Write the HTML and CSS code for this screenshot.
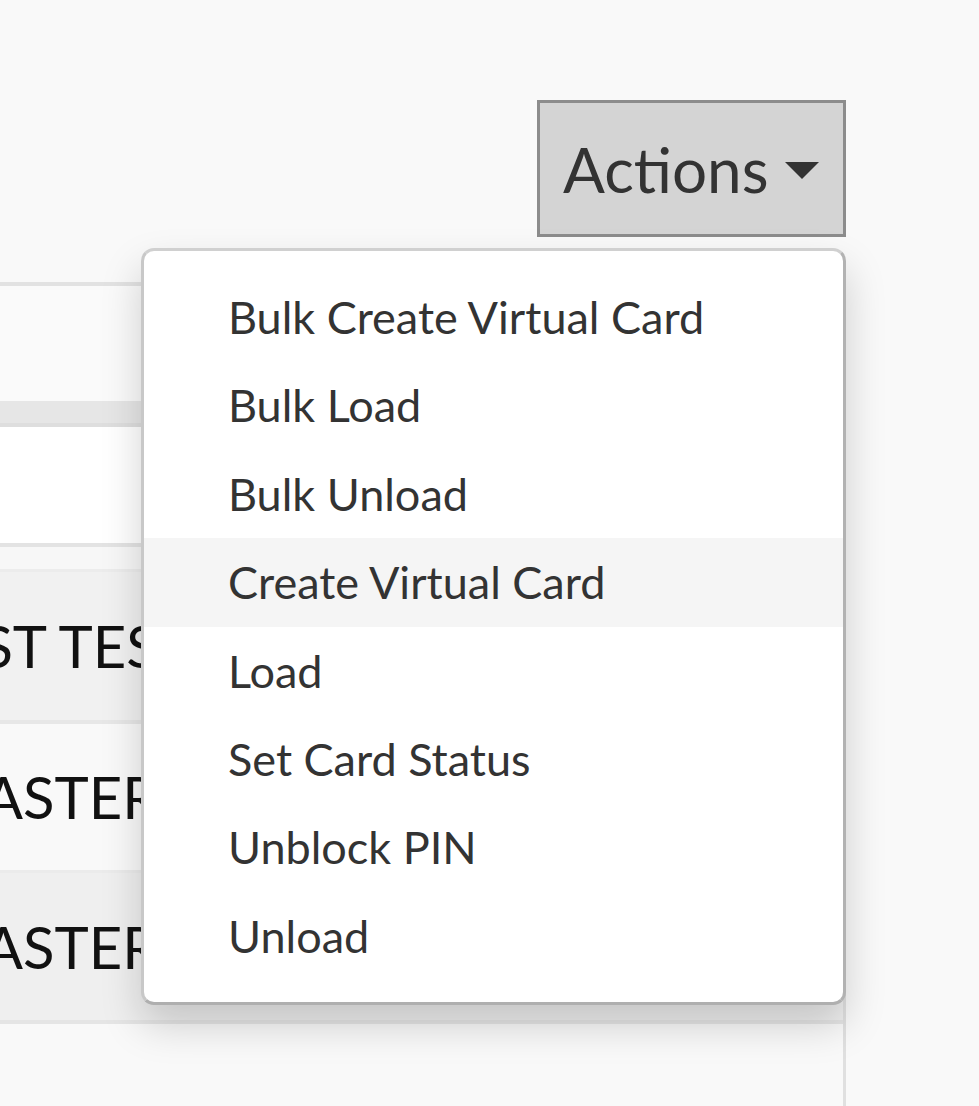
FILE: index.html
```html
<!DOCTYPE html>
<html lang="en">
<head>
<meta charset="utf-8">
<title>Cards - Actions</title>
<link rel="stylesheet" href="styles.css">
</head>
<body>
  <div class="toolbar">
    <div class="actions">
      <button class="btn-actions" type="button">
        <span class="btn-label">Actions</span>
        <span class="caret"></span>
      </button>
      <ul class="menu">
        <li class="menu-item">Bulk Create Virtual Card</li>
        <li class="menu-item">Bulk Load</li>
        <li class="menu-item">Bulk Unload</li>
        <li class="menu-item is-hover">Create Virtual Card</li>
        <li class="menu-item">Load</li>
        <li class="menu-item">Set Card Status</li>
        <li class="menu-item">Unblock PIN</li>
        <li class="menu-item">Unload</li>
      </ul>
    </div>
  </div>

  <div class="panel">
    <div class="panel-head"></div>
    <div class="thead-band"></div>
    <div class="row row-white"></div>
    <div class="row row-sub"></div>
    <div class="row row-d"><span class="cell cell-d">FIRST TEST</span></div>
    <div class="row row-e"><span class="cell cell-e">MASTERCARD</span></div>
    <div class="row row-f"><span class="cell cell-f">MASTERCARD</span></div>
  </div>
</body>
</html>
```

FILE: styles.css
```css
html, body {
  margin: 0;
  padding: 0;
  overflow: hidden;
}

body {
  background: #f9f9f9;
  font-family: "Lato", "Open Sans", sans-serif;
  color: #333;
  width: 979px;
  height: 1106px;
}

.toolbar {
  display: flex;
  justify-content: flex-end;
  padding-top: 100px;
  padding-right: 133px;
  height: 137px;
}

.actions {
  position: relative;
}

.btn-actions {
  box-sizing: border-box;
  width: 309px;
  height: 137px;
  display: flex;
  align-items: center;
  gap: 16px;
  padding: 0 24px 0 23px;
  margin: 0;
  background: #d4d4d4;
  border: 3px solid #8c8c8c;
  border-radius: 0;
  font-family: "Lato", sans-serif;
  font-size: 62px;
  color: #333;
  line-height: 1;
}

.btn-label {
  display: block;
}

.caret {
  display: block;
  width: 0;
  height: 0;
  border-top: 17px solid #333;
  border-left: 17px solid transparent;
  border-right: 17px solid transparent;
  margin-top: 4px;
}

.menu {
  position: absolute;
  z-index: 10;
  top: calc(100% + 11px);
  right: 0;
  box-sizing: border-box;
  width: 705px;
  margin: 0;
  padding: 22px 0;
  list-style: none;
  background: #fff;
  border: 3px solid #d0d0d0;
  border-left-color: #c8c8c8;
  border-right-color: #b2b2b2;
  border-bottom-color: #afafaf;
  border-radius: 13px;
  box-shadow: 0 20px 40px rgba(0, 0, 0, 0.175);
}

.menu-item {
  height: 88.4px;
  line-height: 88.4px;
  padding-left: 84px;
  font-size: 45px;
  color: #333;
  white-space: nowrap;
}

.menu-item.is-hover {
  background: #f5f5f5;
}

.panel {
  margin-top: 45px;
  margin-left: -80px;
  margin-right: 133px;
  height: 820px;
  border-top: 4px solid #e2e2e2;
  border-right: 3px solid #e0e0e0;
}

.panel-head {
  height: 115px;
  background: #fafafa;
}

.thead-band {
  height: 22px;
  background: #e6e6e6;
  border-bottom: 4px solid #dedede;
}

.row {
  display: flex;
  align-items: center;
}

.row-white {
  height: 116px;
  background: #fff;
  border-bottom: 4px solid #e3e3e3;
}

.row-sub {
  height: 22px;
  background: #f7f7f7;
  border-bottom: 3px solid #ececec;
}

.row-d {
  height: 148px;
  background: #f1f1f1;
  border-bottom: 4px solid #e7e7e7;
}

.row-e {
  height: 146px;
  background: #f9f9f9;
  border-bottom: 3px solid #ebebeb;
}

.row-f {
  height: 147px;
  background: #efefef;
  border-bottom: 4px solid #e5e5e5;
}

.cell {
  font-size: 58px;
  color: #111;
  white-space: nowrap;
  line-height: 1;
}

.cell-d {
  margin-left: -24px;
}

.cell-e,
.cell-f {
  padding-left: 10px;
}
```
